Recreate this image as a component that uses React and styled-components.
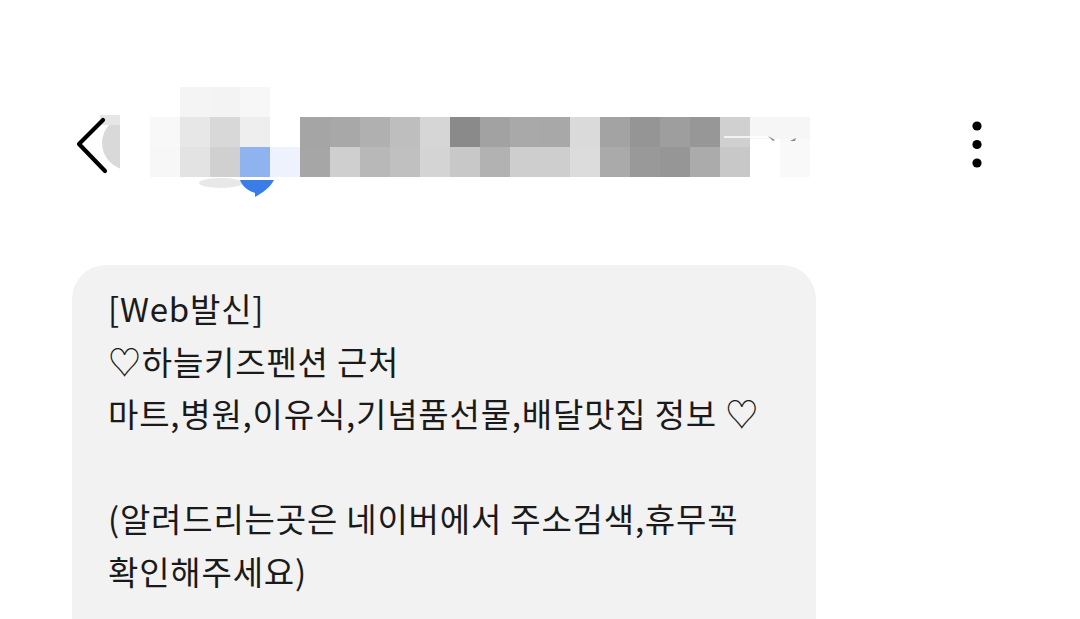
import React from 'react'
import styled, { createGlobalStyle } from 'styled-components'

const GlobalStyle = createGlobalStyle`
  html, body {
    margin: 0;
    padding: 0;
    background: #ffffff;
    overflow: hidden;
  }
  body {
    font-family: "Noto Sans CJK KR", "Noto Sans", sans-serif;
  }
`

// mosaic tiles of the redacted avatar + sender name, page coords offset by (100, 87)
const rowTop = ['#a5a5a5', '#a8a8a8', '#b0b0b0', '#bebebe', '#d6d6d6', '#8a8a8a', '#a2a2a2', '#a9a9a9', '#a8a8a8', '#dadada', '#a3a3a3', '#959595', '#9e9e9e', '#979797', '#d0d0d0']
const rowBottom = ['#a6a6a6', '#cfcfcf', '#b8b8b8', '#c0c0c0', '#d4d4d4', '#c8c8c8', '#b2b2b2', '#cecece', '#cecece', '#dcdcdc', '#aaaaaa', '#999999', '#969696', '#ababab', '#c8c8c8']

const avatarTiles = [
  { x: 180, y: 87, c: '#f4f4f4' },
  { x: 210, y: 87, c: '#f3f3f3' },
  { x: 240, y: 87, c: '#f7f7f7' },
  { x: 150, y: 117, c: '#f8f8f8' },
  { x: 180, y: 117, c: '#e7e7e7' },
  { x: 210, y: 117, c: '#d8d8d8' },
  { x: 240, y: 117, c: '#eeeeee' },
  { x: 150, y: 147, c: '#f7f7f7' },
  { x: 180, y: 147, c: '#e3e3e3' },
  { x: 210, y: 147, c: '#d0d0d0' },
  { x: 240, y: 147, c: '#8fb3ee' },
  { x: 270, y: 147, c: '#eef2fc' },
]

const Mosaic = () => (
  <MosaicSvg width="715" height="116" viewBox="100 87 715 116">
    <defs>
      <clipPath id="avatarClip">
        <rect x="96" y="100" width="24" height="80" />
      </clipPath>
    </defs>
    <g clipPath="url(#avatarClip)">
      <circle cx="129" cy="143" r="27" fill="#d9d9d9" />
      <rect x="96" y="115" width="24" height="10" fill="#e6e6e6" />
    </g>
    {avatarTiles.map((t, i) => (
      <rect key={i} x={t.x} y={t.y} width="30" height="30" fill={t.c} />
    ))}
    <ellipse cx="221" cy="183" rx="22" ry="5" fill="#e8e8e8" />
    {rowTop.map((c, i) => (
      <rect key={'t' + i} x={300 + i * 30} y="117" width="30" height="30" fill={c} />
    ))}
    {rowBottom.map((c, i) => (
      <rect key={'b' + i} x={300 + i * 30} y="147" width="30" height="30" fill={c} />
    ))}
    <rect x="750" y="117" width="60" height="22" fill="#f6f6f6" />
    <rect x="780" y="139" width="30" height="38" fill="#f9f9f9" />
    <line x1="724" y1="137" x2="768" y2="137" stroke="#ffffff" strokeWidth="1.5" />
    <path d="M768 136 L775 140 L773 141 Z" fill="#888" />
    <path d="M790 141 L796 138 L795 141 Z" fill="#888" />
    <path d="M240 180 L274 180 C270 188 262 193 255 197 L255 193 C248 191 242 186 240 180 Z" fill="#3a7ce8" />
  </MosaicSvg>
)

const App = () => {
  return (
    <Page>
      <GlobalStyle />
      <Header>
        <BackButton aria-label="뒤로">
          <svg width="36" height="60" viewBox="0 0 36 60">
            <path d="M29 5 L5 29 L31 56" fill="none" stroke="#000" strokeWidth="4.2" strokeLinecap="round" strokeLinejoin="round" />
          </svg>
        </BackButton>
        <Mosaic />
        <MoreButton aria-label="더보기">
          <svg width="20" height="54" viewBox="0 0 20 54">
            <circle cx="10" cy="8" r="4.6" fill="#000" />
            <circle cx="10" cy="26.5" r="4.6" fill="#000" />
            <circle cx="10" cy="45" r="4.6" fill="#000" />
          </svg>
        </MoreButton>
      </Header>
      <Bubble>
        <Line>[Web발신]</Line>
        <Line>♡하늘키즈펜션 근처</Line>
        <Line>마트,병원,이유식,기념품선물,배달맛집 정보 ♡</Line>
        <Line>&nbsp;</Line>
        <Line>(알려드리는곳은 네이버에서 주소검색,휴무꼭</Line>
        <Line>확인해주세요)</Line>
      </Bubble>
    </Page>
  )
}

export const Page = styled.div`
  width: 1080px;
  height: 619px;
  overflow: hidden;
  background: #ffffff;
`

export const Header = styled.div`
  display: flex;
  align-items: center;
  height: 116px;
  margin-top: 87px;
  padding: 0 93px 0 74px;
`

export const BackButton = styled.div`
  width: 26px;
  height: 60px;
  display: flex;
  align-items: center;
  position: relative;
  z-index: 1;
  svg {
    overflow: visible;
    flex-shrink: 0;
  }
`

export const MosaicSvg = styled.svg`
  display: block;
  flex-shrink: 0;
`

export const MoreButton = styled.div`
  margin-left: auto;
  display: flex;
  align-items: center;
  svg {
    display: block;
  }
`

export const Bubble = styled.div`
  margin: 62px 0 0 72px;
  width: 744px;
  box-sizing: border-box;
  padding: 17px 30px 60px 36px;
  background: #f2f2f2;
  border-radius: 34px;
`

export const Line = styled.div`
  font-family: "Noto Sans CJK KR", "Noto Sans", sans-serif;
  font-size: 33px;
  letter-spacing: 0.8px;
  line-height: 52.5px;
  color: #1a1a1a;
  white-space: nowrap;
`

export default App
